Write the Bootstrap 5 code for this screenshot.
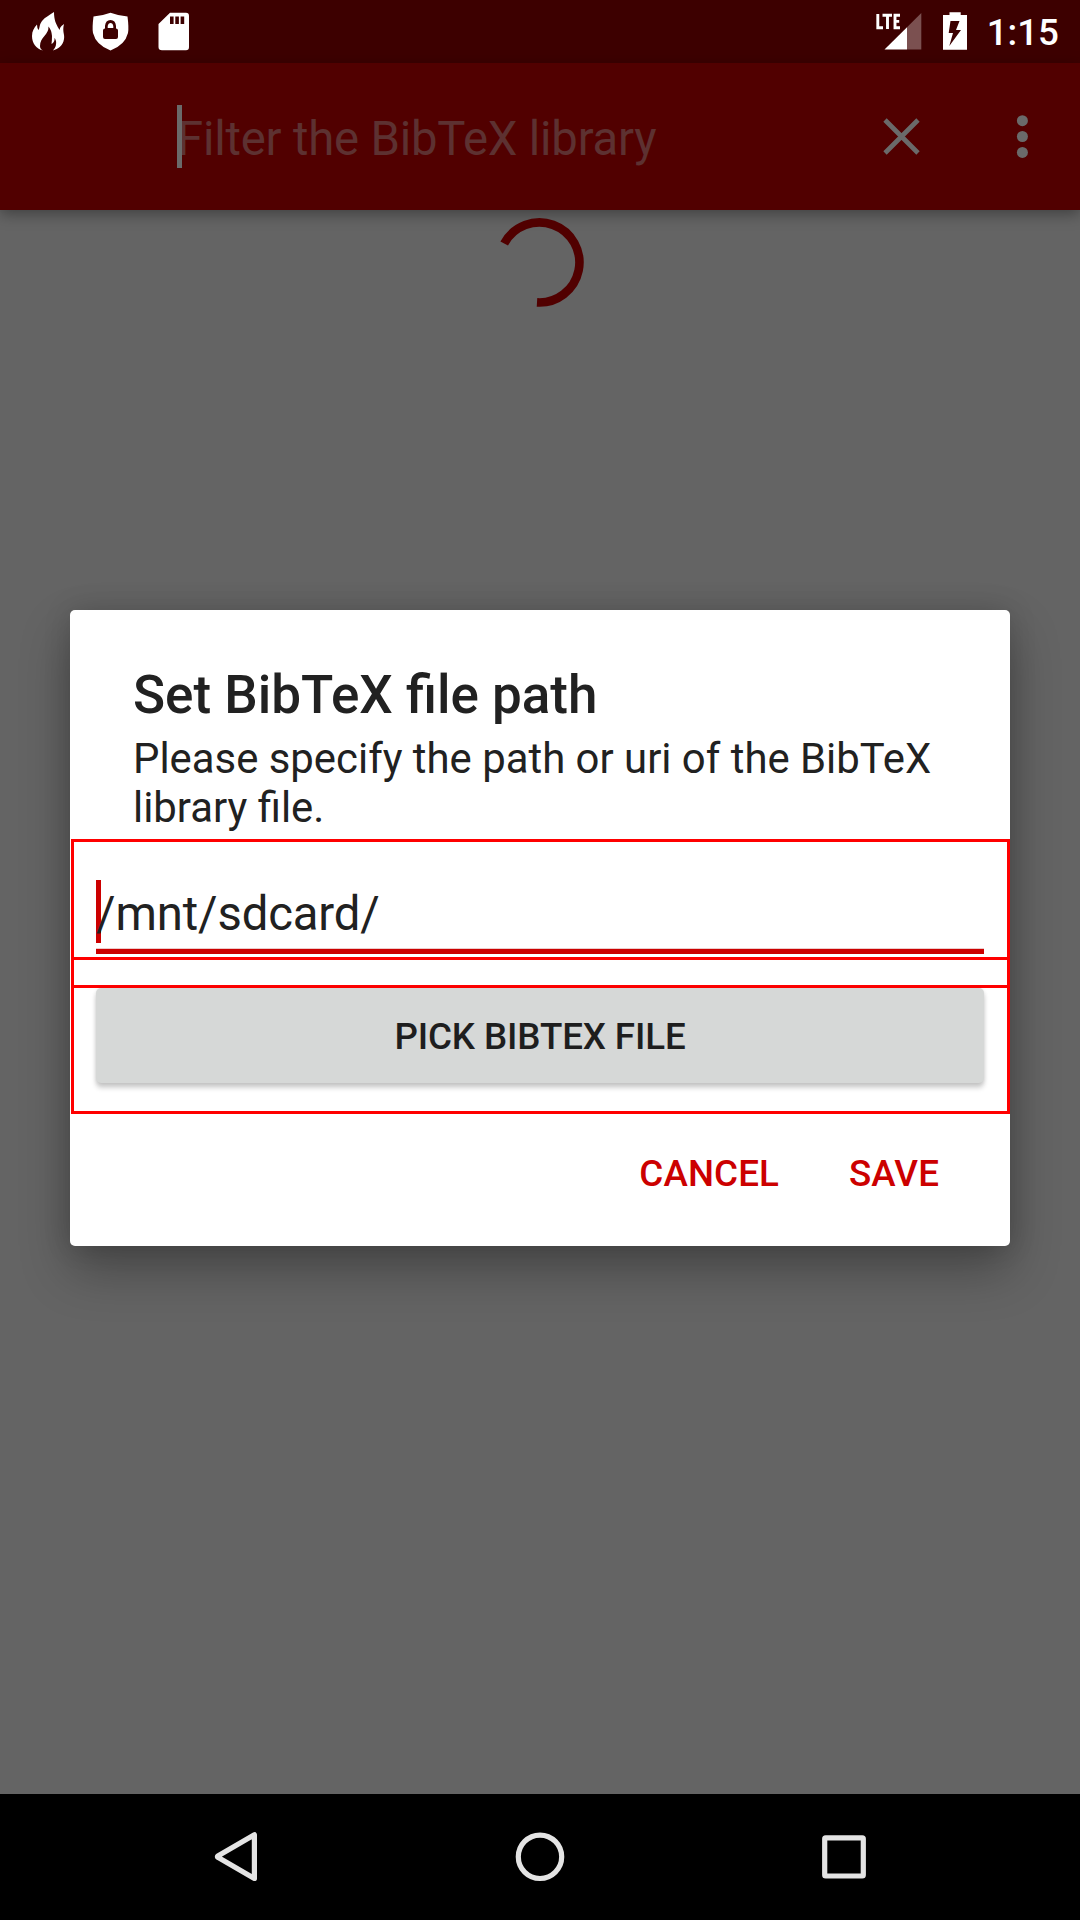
<!DOCTYPE html>
<html lang="en">
<head>
<meta charset="utf-8">
<meta name="viewport" content="width=device-width, initial-scale=1">
<title>Set BibTeX file path</title>
<link href="https://cdn.jsdelivr.net/npm/bootstrap@5.3.0/dist/css/bootstrap.min.css" rel="stylesheet">
<style>
body{font-family:Roboto,"Noto Sans",sans-serif;background:#646464;width:1080px;height:1920px;overflow:hidden;color:#212121}
svg{display:block;flex:none}
.status-bar{height:63px;background:#3d0000;padding:0 21px 0 24px}
.clock{font-size:36.75px;font-weight:500;line-height:43px;color:#fff;margin-left:19px;padding-top:1px}
.app-bar{height:147px;background:#510000;padding-left:177px;box-shadow:0 4px 14px rgba(0,0,0,.36)}
.hint{font-size:47.25px;line-height:63px;color:#5d3131;width:695px;letter-spacing:-.2px}
.hint-text,.path-text{display:block;position:relative;padding-top:3px;height:63px}
.caret{left:0;width:5px;height:63px}
.nav-keys{height:126px;background:#000}
.path-dialog{left:70px;top:610px;width:940px;height:636px;border-radius:5px;background:#fff;box-shadow:0 24px 50px rgba(0,0,0,.3),0 0 28px rgba(0,0,0,.14)}
.dlg-head{padding:54px 63px 0;height:229px}
.dlg-title{font-size:53px;font-weight:500;line-height:62px;margin:0;text-rendering:optimizeLegibility;font-variant-ligatures:common-ligatures}
.dlg-msg{font-size:41.87px;line-height:49px;margin:8px 0 0;text-rendering:optimizeLegibility;font-variant-ligatures:common-ligatures}
.outline{margin-left:1px;border:3px solid #f00}
.field-box{height:121px;padding:38px 23px 0 22px}
.gap-box{height:25px;border-width:0 3px}
.pick-box{height:129px;padding:0 23px 0 22px}
.path-input{font-size:47.25px;line-height:63px;height:74px;box-shadow:inset 0 -5px #c00,inset 0 -6px #eccaca;letter-spacing:-.12px}
.pick-btn{height:95px;border:0;border-radius:5px;background:#d6d8d7;color:#1e1e1e;font-size:36.75px;font-weight:500;line-height:43px;padding:2px 0 0;letter-spacing:-.13px;box-shadow:0 5px 5px rgba(0,0,0,.18),0 1px 4px rgba(0,0,0,.1)}
.actions{padding:38px 71px 0 0;gap:70px}
.act{font-size:36.75px;font-weight:500;line-height:43px;color:#c00;padding:0;border:0;letter-spacing:.1px}
</style>
<script src="https://cdn.jsdelivr.net/npm/bootstrap@5.3.0/dist/js/bootstrap.bundle.min.js"></script>
</head>
<body class="d-flex flex-column position-relative">
<header class="status-bar d-flex align-items-center justify-content-between">
  <div class="d-flex">
    <svg width="180" height="63" viewBox="24 0 180 63" fill="#fff">
      <path d="M54 12C54 20 56 24 59 29Q60 31 60 28Q61 26 64 24C62 32 65 34 64 39C63 46 58 49 53 50.500Q57 46 56 41Q55 38 54.500 38Q55 42 51.500 44Q52 40 52 36Q51.500 30 48.500 26.500C49 35 40 37 40 46Q40 49 43 50.500C36 49 32 43 32 36C32 31 34 28 37 24.500Q37 28 38.500 30C40 28 39 25 42 21C45 17 50 15 54 12Z"/>
      <path fill-rule="evenodd" d="M110.500 12.800Q119 16 127.500 16.500Q129 28 128 33Q125 45 110.500 50.500Q96 45 93 33Q92 28 93.500 16.500Q102 16 110.500 12.800ZM105 28.500Q103 28.500 103 30.500V37Q103 39 105 39H116Q118 39 118 37V30.500Q118 28.500 116 28.500V26Q115.500 20 110.500 20Q105.500 20 105 26ZM107.700 28V26Q108.300 23 110.500 23Q112.800 23 113.300 26V28Z"/>
      <path fill-rule="evenodd" d="M170 12.700H186Q189 12.700 189 16V47Q189 50.300 186 50.300H162Q158.500 50.300 158.500 47V24ZM170 16.500V24H173.600V16.500ZM175.300 16.500V24H178.900V16.500ZM180.600 16.500V24H184.200V16.500Z"/>
    </svg>
  </div>
  <div class="d-flex align-items-center">
    <svg width="96" height="63" viewBox="872 0 96 63">
      <path d="M921.300 13V49.500H907V27.300Z" fill="#7b5050"/>
      <path d="M907 27.300V49.500H884.500Z" fill="#fff"/>
      <path d="M877.800 14V27.700H883M882.500 15.300H892M887.500 15V29M900 15.300H895V27.700H900M895 21.400H899.200" fill="none" stroke="#fff" stroke-width="2.900"/>
      <path fill="#fff" fill-rule="evenodd" d="M949.500 12.300H960.700V15H967V49.700H943V15H949.500ZM950.500 21L948.700 33H953L949.300 46L961 30H956L959.500 21Z"/>
    </svg>
    <span class="clock">1:15</span>
  </div>
</header>

<nav class="app-bar d-flex align-items-center">
  <div class="hint position-relative"><span class="hint-text">Filter the BibTeX library</span><span class="caret position-absolute top-0" style="background:#6a6a6a"></span></div>
  <svg width="200" height="147" viewBox="872 63 200 147">
    <path d="M885 120L918 153M918 120L885 153" stroke="#6a6a6a" stroke-width="4.700"/>
    <g fill="#6a6a6a"><circle cx="1022.400" cy="120.700" r="5.500"/><circle cx="1022.400" cy="136.500" r="5.500"/><circle cx="1022.400" cy="152.400" r="5.500"/></g>
  </svg>
</nav>

<main class="flex-grow-1 d-flex justify-content-center align-items-start">
  <svg width="100" height="110" viewBox="490 210 100 110"><path d="M537 302.400A40 40 0 1 0 504.200 243.500" fill="none" stroke="#510000" stroke-width="8.600"/></svg>
</main>

<footer class="nav-keys d-flex">
  <svg width="1080" height="126" viewBox="0 1794 1080 126" fill="none" stroke="#e4e4e4" stroke-width="5.200" stroke-linejoin="round">
    <path d="M254.400 1834.800V1878.500L217.800 1857.300Q217 1856.700 217.800 1856Z"/>
    <circle cx="540" cy="1856.800" r="21.700"/>
    <rect x="824.700" y="1837.800" width="38.600" height="38.200" rx="1"/>
  </svg>
</footer>

<section class="path-dialog position-absolute">
  <div class="dlg-head">
    <h1 class="dlg-title">Set BibTeX file path</h1>
    <p class="dlg-msg">Please specify the path or uri of the BibTeX<br>library file.</p>
  </div>
  <div class="outline field-box">
    <div class="path-input position-relative"><span class="caret position-absolute top-0" style="background:#c00"></span><span class="path-text">/mnt/sdcard/</span></div>
  </div>
  <div class="outline gap-box"></div>
  <div class="outline pick-box">
    <button type="button" class="pick-btn w-100 d-block">PICK BIBTEX FILE</button>
  </div>
  <div class="actions d-flex justify-content-end">
    <button type="button" class="act bg-transparent">CANCEL</button>
    <button type="button" class="act bg-transparent">SAVE</button>
  </div>
</section>
</body>
</html>
